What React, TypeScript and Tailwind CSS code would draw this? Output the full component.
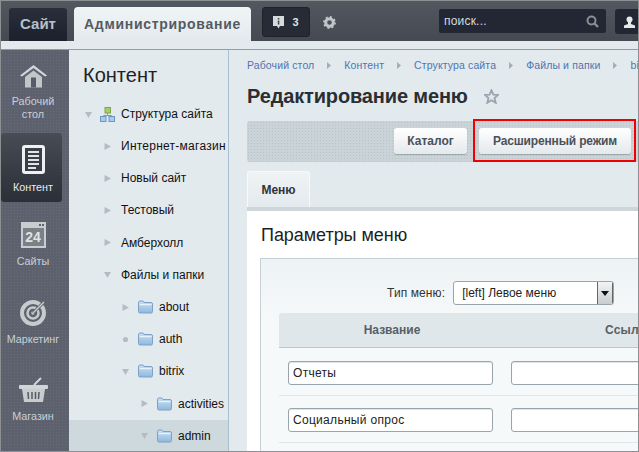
const F = "font-['Liberation_Sans',Arial,sans-serif]";

function Tri({ dir, x }: { dir: "r" | "d" | "o"; x: number }) {
  return (
    <svg width="9" height="9" viewBox="0 0 9 9" className="shrink-0" style={{ marginLeft: x }}>
      {dir === "r" && <path d="M1.500 1 L8 4.500 L1.500 8 Z" fill="#b3bdc2" />}
      {dir === "d" && <path d="M1 2 L8 2 L4.500 8 Z" fill="#b3bdc2" />}
      {dir === "o" && <circle cx="4.500" cy="4.500" r="2.600" fill="#b3bdc2" />}
    </svg>
  );
}

function Folder() {
  return (
    <svg width="15" height="14" viewBox="0 0 15 14" className="shrink-0">
      <defs>
        <linearGradient id="fg" x1="0" y1="0" x2="0" y2="1">
          <stop offset="0" stopColor="#c9e0f2" />
          <stop offset="1" stopColor="#8fb9de" />
        </linearGradient>
      </defs>
      <path d="M.5 2.500 a1.500 1.500 0 0 1 1.500-1.500 h3 l1 1.500 h7 a1.500 1.500 0 0 1 1.500 1.500 v7.500 a1.500 1.500 0 0 1-1.500 1.500 h-11 a1.500 1.500 0 0 1-1.500-1.500 Z" fill="url(#fg)" stroke="#7ba1c9" />
      <rect x="1.500" y="4" width="12" height="1.200" fill="#e8f2fa" />
    </svg>
  );
}

function TreeRow({ label, dir, indent, folder, gap, active, wide }: { label: string; dir: "r" | "d" | "o"; indent: number; folder?: boolean; gap: number; active?: boolean; wide?: boolean }) {
  return (
    <div className={`h-[32.2px] flex items-center ${active ? "bg-[#ced9de]" : ""}`}>
      <Tri dir={dir} x={indent} />
      {folder && <div className="ml-[8px] flex"><Folder /></div>}
      <span className={`text-[12px] text-[#111] whitespace-nowrap ${wide ? "tracking-[0.25px]" : ""}`} style={{ marginLeft: gap }}>{label}</span>
    </div>
  );
}

function SideItem({ label, children, active, h, pt }: { label: React.ReactNode; children: React.ReactNode; active?: boolean; h: string; pt: string }) {
  return (
    <div className={`w-[61px] ${h} ${pt} flex flex-col items-start rounded-[3px] ${active ? "bg-gradient-to-b from-[#474c55] to-[#2b2f38]" : ""}`}>
      <div className="flex flex-col items-center w-[64px] shrink-0">
        {children}
        <div className={`text-[10.8px] leading-[13px] text-center whitespace-nowrap mt-[7px] ${active ? "text-[#e8ebed]" : "text-[#c9d0d6]"}`}>{label}</div>
      </div>
    </div>
  );
}

const Sep = () => (
  <svg width="4" height="7" viewBox="0 0 4 7" className="shrink-0 mx-[13px]"><path d="M0 0 L4 3.500 L0 7 Z" fill="#a6aeb4" /></svg>
);

const inputCls = "h-[24px] shrink-0 bg-white border border-[#9aa5ab] rounded-[3px] shadow-[inset_0_1px_1px_#dfe3e5] text-[12px] text-[#222] flex items-center px-[4px] tracking-[0.3px]";

export default function App() {
  return (
    <div className={`${F} w-[639px] h-[452px] overflow-hidden relative border border-[#8d8f92] flex flex-col bg-[#e3eaee]`}>
      {/* top bar */}
      <div className="h-[40px] shrink-0 bg-gradient-to-b from-[#53575f] to-[#454952] flex items-end pl-[8px]">
        <div className="w-[58px] h-[33px] rounded-t-[3px] bg-gradient-to-b from-[#2b2f3b] to-[#1c202c] flex items-center justify-center text-[#b6c1c9] font-bold text-[15px]">Сайт</div>
        <div className="ml-[7px] w-[177px] h-[34px] rounded-t-[4px] bg-gradient-to-b from-[#f0f4f5] to-[#e3eaee] flex items-center justify-center text-[#555a62] font-bold text-[14px] tracking-[0.7px]">Администрирование</div>
        <div className="self-start mt-[6px] ml-[11px] w-[48px] h-[30px] rounded-[3px] bg-[#272b35] border border-[#1f222b] flex items-center justify-center gap-[8px]">
          <svg width="11" height="13" viewBox="0 0 11 13"><path d="M0 0 H11 V10 H7 L5.500 12.500 L4 10 H0 Z" fill="#d5dadc" /><rect x="4.800" y="2" width="1.500" height="1.500" fill="#444" /><rect x="4.800" y="4.500" width="1.500" height="4" fill="#444" /></svg>
          <span className="text-[#dfe3e5] text-[11px] font-bold">3</span>
        </div>
        <svg width="13" height="13" viewBox="0 0 13 13" className="self-start mt-[15px] ml-[13px]">
          <circle cx="6.500" cy="6.500" r="3.800" fill="none" stroke="#c0c5c9" strokeWidth="3" />
          <circle cx="6.500" cy="6.500" r="5.400" fill="none" stroke="#c0c5c9" strokeWidth="2" strokeDasharray="2 2.200" />
        </svg>
        <div className="self-start mt-[8px] ml-[103px] w-[167px] h-[24px] rounded-[2px] bg-[#232733] flex items-center justify-between pl-[5px] pr-[7px]">
          <span className="text-[#d6dadd] text-[12px] tracking-[0.2px]">поиск...</span>
          <svg width="13" height="13" viewBox="0 0 13 13"><circle cx="5.500" cy="5.500" r="4" fill="none" stroke="#8a8e93" strokeWidth="2" /><path d="M8.500 8.500 L12 12" stroke="#8a8e93" strokeWidth="2.400" /></svg>
        </div>
        <div className="self-start mt-[8px] ml-[9px] flex-1 h-[25px] rounded-l-[3px] bg-[#232733] flex items-center pl-[9px]">
          <svg width="11" height="12" viewBox="0 0 11 12"><circle cx="5.500" cy="3.500" r="3" fill="#e6e8ea" /><path d="M4 6 h3 v2 l4 1.500 V12 H0 V9.500 L4 8 Z" fill="#e6e8ea" /></svg>
        </div>
      </div>
      {/* strip */}
      <div className="h-[8px] shrink-0 bg-[#e3eaee] border-b border-[#979c9f] box-content" />

      <div className="flex-1 flex min-h-0">
        {/* sidebar */}
        <div className="w-[68px] shrink-0 bg-[#5c616d] bg-[radial-gradient(#676c78_0.7px,transparent_0.8px)] bg-[length:3px_3px] flex flex-col overflow-hidden">
          <SideItem label={<>Рабочий<br />стол</>} h="h-[83px]" pt="pt-[15px]">
            <svg width="27" height="23" viewBox="0 0 27 23">
              <path d="M0 10.500 L13.500 0 L27 10.500 L25 11.500 L13.500 3 L2 11.500 Z" fill="#d3d7d9" />
              <path d="M5 12 L13.500 5.500 L22 12 V22.500 H5 Z" fill="#c2c6c9" />
              <rect x="11" y="12.500" width="5" height="10" fill="#565b65" />
            </svg>
          </SideItem>
          <SideItem active label="Контент" h="h-[69px]" pt="pt-[12px]">
            <div className="w-[23px] h-[29px] bg-[#3a3e47] border-[3px] border-[#eef0f1] rounded-[3px] flex flex-col justify-center gap-[2px] px-[3px]">
              <div className="h-[2px] bg-[#e2e4e6]" /><div className="h-[2px] bg-[#e2e4e6]" /><div className="h-[2px] bg-[#e2e4e6]" /><div className="h-[2px] bg-[#e2e4e6]" /><div className="h-[2px] w-[8px] bg-[#e2e4e6]" />
            </div>
          </SideItem>
          <SideItem label="Сайты" h="h-[77px]" pt="pt-[20px]">
            <div className="relative w-[25px] h-[26px] bg-[#7b7f86] border-t-[6px] border-x-[2px] border-b-[2px] border-[#c9cdd0] flex items-center justify-center text-[#dfe2e4] text-[14px] font-bold leading-none">
              24
              <div className="absolute -top-[4px] right-0 flex gap-[1px]"><div className="w-[2px] h-[2px] bg-[#5c616d]" /><div className="w-[2px] h-[2px] bg-[#5c616d]" /></div>
            </div>
          </SideItem>
          <SideItem label="Маркетинг" h="h-[79px]" pt="pt-[20px]">
            <svg width="26" height="27" viewBox="0 0 26 27">
              <circle cx="13" cy="14" r="11" fill="none" stroke="#c7cbce" strokeWidth="4" />
              <circle cx="13" cy="14" r="5.500" fill="none" stroke="#c7cbce" strokeWidth="2.500" />
              <circle cx="13" cy="14" r="1.800" fill="#c7cbce" />
              <path d="M13 14 L24 3" stroke="#5c616d" strokeWidth="3" />
              <path d="M13 14 L24 3" stroke="#c7cbce" strokeWidth="1.500" />
            </svg>
          </SideItem>
          <SideItem label="Магазин" h="h-[77px]" pt="pt-[19px]">
            <svg width="29" height="26" viewBox="0 0 29 26">
              <path d="M15 8 L22 1" stroke="#d2d5d7" strokeWidth="2" />
              <rect x="0" y="8" width="29" height="4" rx="1" fill="#d2d5d7" />
              <path d="M3 12 H26 L24 25 H5 Z" fill="#c8ccce" />
              <path d="M9 15 L9.500 22 M13 15 V22 M16.500 15 V22 M20 15 L19.500 22" stroke="#555a63" strokeWidth="1.500" />
            </svg>
          </SideItem>
        </div>

        {/* tree */}
        <div className="w-[160px] shrink-0 bg-[#e3eaee] border-r border-[#a9c0d0] overflow-hidden">
          <div className="pl-[14px] h-[48px] pt-[13px] text-[20px] leading-[24px] text-[#222]">Контент</div>
          <div className="h-[32px] flex items-center">
            <Tri dir="d" x={15} />
            <svg width="15" height="15" viewBox="0 0 15 15" className="ml-[7px] shrink-0">
              <path d="M7.500 6 V9 M3.500 10 V8.500 H11.500 V10" stroke="#8a9aa8" fill="none" />
              <rect x="5" y="0.500" width="5.500" height="5.500" fill="#a7cc6a" stroke="#7ea54a" />
              <rect x="0.500" y="9.500" width="5.500" height="5" fill="#a9cbe6" stroke="#6f96c2" />
              <rect x="9" y="9.500" width="5.500" height="5" fill="#a9cbe6" stroke="#6f96c2" />
            </svg>
            <span className="text-[12px] text-[#111] ml-[6px] whitespace-nowrap">Структура сайта</span>
          </div>
          <TreeRow label="Интернет-магазин" dir="r" indent={34} gap={9} wide />
          <TreeRow label="Новый сайт" dir="r" indent={34} gap={9} />
          <TreeRow label="Тестовый" dir="r" indent={34} gap={9} />
          <TreeRow label="Амберхолл" dir="r" indent={34} gap={9} />
          <TreeRow label="Файлы и папки" dir="d" indent={34} gap={9} />
          <TreeRow label="about" dir="r" indent={52} folder gap={6} />
          <TreeRow label="auth" dir="o" indent={52} folder gap={6} />
          <TreeRow label="bitrix" dir="d" indent={52} folder gap={6} />
          <TreeRow label="activities" dir="r" indent={71} folder gap={6} />
          <TreeRow label="admin" dir="d" indent={71} folder gap={6} active />
        </div>

        {/* content */}
        <div className="flex-1 min-w-0 overflow-hidden bg-[#e3eaee] pl-[18px]">
          <div className="h-[31px] flex items-center text-[10.5px] text-[#4f74ae] tracking-[0.12px] whitespace-nowrap">
            <span>Рабочий стол</span><Sep /><span>Контент</span><Sep /><span>Структура сайта</span><Sep /><span>Файлы и папки</span><Sep /><span>bit</span>
          </div>
          <div className="h-[40px] pb-[10px] flex items-center text-[20px] font-bold text-[#2b2e33] whitespace-nowrap tracking-[-0.15px]">
            Редактирование меню
            <svg width="15" height="15" viewBox="0 0 24 24" className="ml-[16px] shrink-0"><path d="M12 2 L15 9 L22.500 9.500 L16.800 14.500 L18.700 22 L12 18 L5.300 22 L7.200 14.500 L1.500 9.500 L9 9 Z" fill="none" stroke="#9ba5ae" strokeWidth="3" /></svg>
          </div>
          <div className="h-[41px] rounded-l-[3px] bg-[#c9d3d8] bg-[radial-gradient(#b9c3c8_0.7px,transparent_0.8px)] bg-[length:3px_3px] flex items-center justify-end pr-[7px] gap-[12px] pb-[1px]">
            <div className="w-[73px] h-[26px] rounded-[3px] bg-gradient-to-b from-[#ffffff] to-[#e4e9ec] shadow-[0_1px_1px_#98a3a9] flex items-center justify-center text-[12px] font-bold text-[#4a5158]">Каталог</div>
            <div className="w-[152px] h-[26px] rounded-[3px] bg-gradient-to-b from-[#ffffff] to-[#e4e9ec] shadow-[0_1px_1px_#98a3a9] flex items-center justify-center text-[12px] font-bold text-[#4a5158] tracking-[-0.15px]">Расширенный режим</div>
          </div>
          <div className="h-[49px] pt-[9px] border-b-[4px] border-[#cfd6da]">
            <div className="w-[63px] h-[36px] rounded-t-[3px] border border-b-0 border-[#f8fafa] bg-gradient-to-b from-[#eff3f4] to-[#e3eaee] flex items-center justify-center text-[12px] font-bold text-[#30343a]">Меню</div>
          </div>
          {/* panel */}
          <div className="bg-white h-[240px]">
            <div className="h-[47px] pl-[14px] pt-[13px] text-[18px] leading-[22px] text-[#1c1f23] tracking-[-0.05px] whitespace-nowrap">Параметры меню</div>
            <div className="ml-[13px] h-[200px] border-t border-l border-[#c6cfd3] bg-gradient-to-b from-[#edf2f4] to-[#f6f9fa] to-[30%] pl-[18px]">
              <div className="h-[54px] pt-[16px] flex items-center pb-[2px] pl-[108px]">
                <span className="text-[12px] text-[#333] whitespace-nowrap tracking-[0.1px]">Тип меню:</span>
                <div className="ml-[8px] w-[161px] h-[24px] shrink-0 bg-white border border-[#9aa5ab] rounded-[3px] flex items-center justify-between pl-[8px] text-[12px] text-[#222] overflow-hidden">
                  <span>[left] Левое меню</span>
                  <div className="w-[16px] h-full bg-gradient-to-b from-[#f3f4f5] to-[#c9cccf] border-x border-[#666] flex items-center justify-center">
                    <svg width="8" height="5" viewBox="0 0 8 5"><path d="M0 0 H8 L4 5 Z" fill="#111" /></svg>
                  </div>
                </div>
              </div>
              <div className="h-[35px] bg-[#e0e7ea] border-b border-[#bcc7cc] rounded-tl-[3px] flex items-center text-[12px] font-bold text-[#575e66] whitespace-nowrap">
                <span className="w-[226px] shrink-0 text-center">Название</span>
                <span className="ml-[100px] shrink-0 tracking-[0.2px]">Ссылка</span>
              </div>
              <div className="h-[48px] pt-[2px] border-b border-[#dfe5e8] flex items-center pl-[9px] gap-[18px]">
                <div className={`${inputCls} w-[205px]`}>Отчеты</div>
                <div className={`${inputCls} w-[150px]`} />
              </div>
              <div className="h-[47px] pt-[2px] border-b border-[#dfe5e8] flex items-center pl-[9px] gap-[18px]">
                <div className={`${inputCls} w-[205px]`}>Социальный опрос</div>
                <div className={`${inputCls} w-[150px]`} />
              </div>
            </div>
          </div>
        </div>
      </div>

      {/* annotation */}
      <div className="absolute left-[472px] top-[118px] w-[163px] h-[43px] border-[2px] border-[#f00000]" />
    </div>
  );
}
